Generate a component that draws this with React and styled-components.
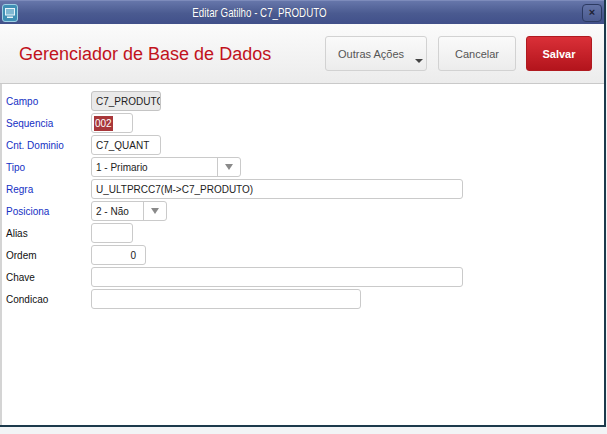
import React from "react";
import styled, { createGlobalStyle } from "styled-components";

const Global = createGlobalStyle`
  html, body { margin:0; padding:0; background:#f2f4f6; }
  body { font-family:"Liberation Sans", Arial, sans-serif; }
  * { box-sizing:border-box; }
`;

const Screen = styled.div`
  width:607px;
  height:434px;
  background:#f2f4f6;
  overflow:hidden;
`;

const Window = styled.div`
  width:606px;
  height:427px;
  display:flex;
  flex-direction:column;
  border-right:2px solid #1c3a4c;
  border-bottom:2px solid #1c3a4c;
  background:#fff;
`;

const TitleBar = styled.div`
  height:24px;
  flex:none;
  display:flex;
  align-items:center;
  padding:0 2px;
  background:linear-gradient(#6676aa, #4a5a90 55%, #41508a);
  border-top:1px solid #7d8bbb;
`;

const TitleText = styled.div`
  flex:1;
  text-align:center;
  padding-right:82px;
  color:#fff;
  font-size:13px;
  span {
    display:inline-block;
    transform:scaleX(0.75);
    text-shadow:0 0 1px rgba(0,0,0,0.35);
  }
`;

const CloseBtn = styled.div`
  width:20px;
  height:18px;
  border:1px solid #2c3a62;
  border-radius:4px;
  background:linear-gradient(#6373a6, #4b5b90);
  display:flex;
  align-items:center;
  justify-content:center;
  color:#1d2233;
  font-size:11px;
  font-weight:bold;
  line-height:1;
`;

const Header = styled.div`
  height:60px;
  flex:none;
  display:flex;
  align-items:center;
  padding:0 12px 0 19px;
  background:linear-gradient(#fbfbfb, #ececec);
  border-bottom:1px solid #c9c9c9;
  box-shadow:0 1px 0 #fff;
`;

const Heading = styled.h1`
  flex:1;
  margin:0;
  color:#c1121c;
  font-size:18px;
  font-weight:normal;
  padding-top:2px;
`;

const Button = styled.div`
  position:relative;
  height:35px;
  width:${p => p.w}px;
  margin-left:${p => p.gap || 0}px;
  border-radius:3px;
  display:flex;
  align-items:center;
  justify-content:${p => (p.menu ? "flex-start" : "center")};
  padding-left:${p => (p.menu ? 12 : 0)}px;
  font-size:11px;
  ${p =>
    p.primary
      ? `background:linear-gradient(#da3038, #b3141c);
         border:1px solid #b01a20;
         color:#fff;
         font-weight:bold;`
      : `background:linear-gradient(#fafafa, #ececec);
         border:1px solid #d2d2d2;
         color:#555;`}
`;

const Caret = styled.span`
  position:absolute;
  right:3px;
  bottom:7px;
  width:0;
  height:0;
  border-left:4px solid transparent;
  border-right:4px solid transparent;
  border-top:4px solid #444;
`;

const Body = styled.div`
  flex:1;
  border-left:2px solid #d4d4d4;
  padding:7px 0 0 4px;
`;

const Row = styled.div`
  display:flex;
  align-items:center;
  height:20px;
  margin-bottom:2px;
`;

const Label = styled.div`
  width:85px;
  font-size:10px;
  color:${p => (p.required ? "#1530c4" : "#111")};
`;

const Field = styled.div`
  width:${p => p.w}px;
  height:20px;
  border:1px solid ${p => (p.disabled ? "#c4c4c4" : "#cacaca")};
  border-radius:3px;
  background:${p => (p.disabled ? "#e9e9e9" : "#fff")};
  font-size:10px;
  color:#222;
  display:flex;
  align-items:center;
  justify-content:${p => (p.right ? "flex-end" : "flex-start")};
  padding:0 ${p => (p.right ? 9 : 4)}px 0 4px;
  overflow:hidden;
  white-space:nowrap;
`;

const Selected = styled.span`
  background:#a8373a;
  color:#fff;
  padding:2px 1px;
  margin-left:-2px;
`;

const Select = styled.div`
  width:${p => p.w}px;
  height:20px;
  border:1px solid #cacaca;
  border-radius:3px;
  display:flex;
  font-size:10px;
  color:#222;
`;

const SelectValue = styled.div`
  flex:1;
  display:flex;
  align-items:center;
  padding-left:4px;
`;

const SelectArrow = styled.div`
  width:23px;
  border-left:1px solid #cacaca;
  display:flex;
  align-items:center;
  justify-content:center;
  &::after {
    content:"";
    border-left:4px solid transparent;
    border-right:4px solid transparent;
    border-top:6px solid #8a8a8a;
  }
`;

const WinIcon = () => (
  <svg width="16" height="18" viewBox="0 0 16 18">
    <rect x="0.5" y="0.5" width="15" height="17" rx="2.5" fill="#3f8fb4" stroke="#9fd0e4" />
    <rect x="3" y="4" width="10" height="7.5" fill="#e8f4fa" />
    <rect x="4" y="5" width="8" height="5.5" fill="#7fb8d2" />
    <rect x="5" y="12.5" width="6" height="1.5" fill="#e8f4fa" />
  </svg>
);

export default function App() {
  return (
    <Screen>
      <Global />
      <Window>
        <TitleBar>
          <WinIcon />
          <TitleText>
            <span>Editar Gatilho - C7_PRODUTO</span>
          </TitleText>
          <CloseBtn>×</CloseBtn>
        </TitleBar>
        <Header>
          <Heading>Gerenciador de Base de Dados</Heading>
          <Button w={102} menu>
            Outras Ações
            <Caret />
          </Button>
          <Button w={78} gap={11}>Cancelar</Button>
          <Button w={66} gap={10} primary>Salvar</Button>
        </Header>
        <Body>
          <Row>
            <Label required>Campo</Label>
            <Field w={70} disabled>C7_PRODUTO</Field>
          </Row>
          <Row>
            <Label required>Sequencia</Label>
            <Field w={42}><Selected>002</Selected></Field>
          </Row>
          <Row>
            <Label required>Cnt. Dominio</Label>
            <Field w={70}>C7_QUANT</Field>
          </Row>
          <Row>
            <Label required>Tipo</Label>
            <Select w={150}>
              <SelectValue>1 - Primario</SelectValue>
              <SelectArrow />
            </Select>
          </Row>
          <Row>
            <Label required>Regra</Label>
            <Field w={372}>U_ULTPRCC7(M-&gt;C7_PRODUTO)</Field>
          </Row>
          <Row>
            <Label required>Posiciona</Label>
            <Select w={76}>
              <SelectValue>2 - Não</SelectValue>
              <SelectArrow />
            </Select>
          </Row>
          <Row>
            <Label>Alias</Label>
            <Field w={42} />
          </Row>
          <Row>
            <Label>Ordem</Label>
            <Field w={55} right>0</Field>
          </Row>
          <Row>
            <Label>Chave</Label>
            <Field w={372} />
          </Row>
          <Row>
            <Label>Condicao</Label>
            <Field w={270} />
          </Row>
        </Body>
      </Window>
    </Screen>
  );
}
